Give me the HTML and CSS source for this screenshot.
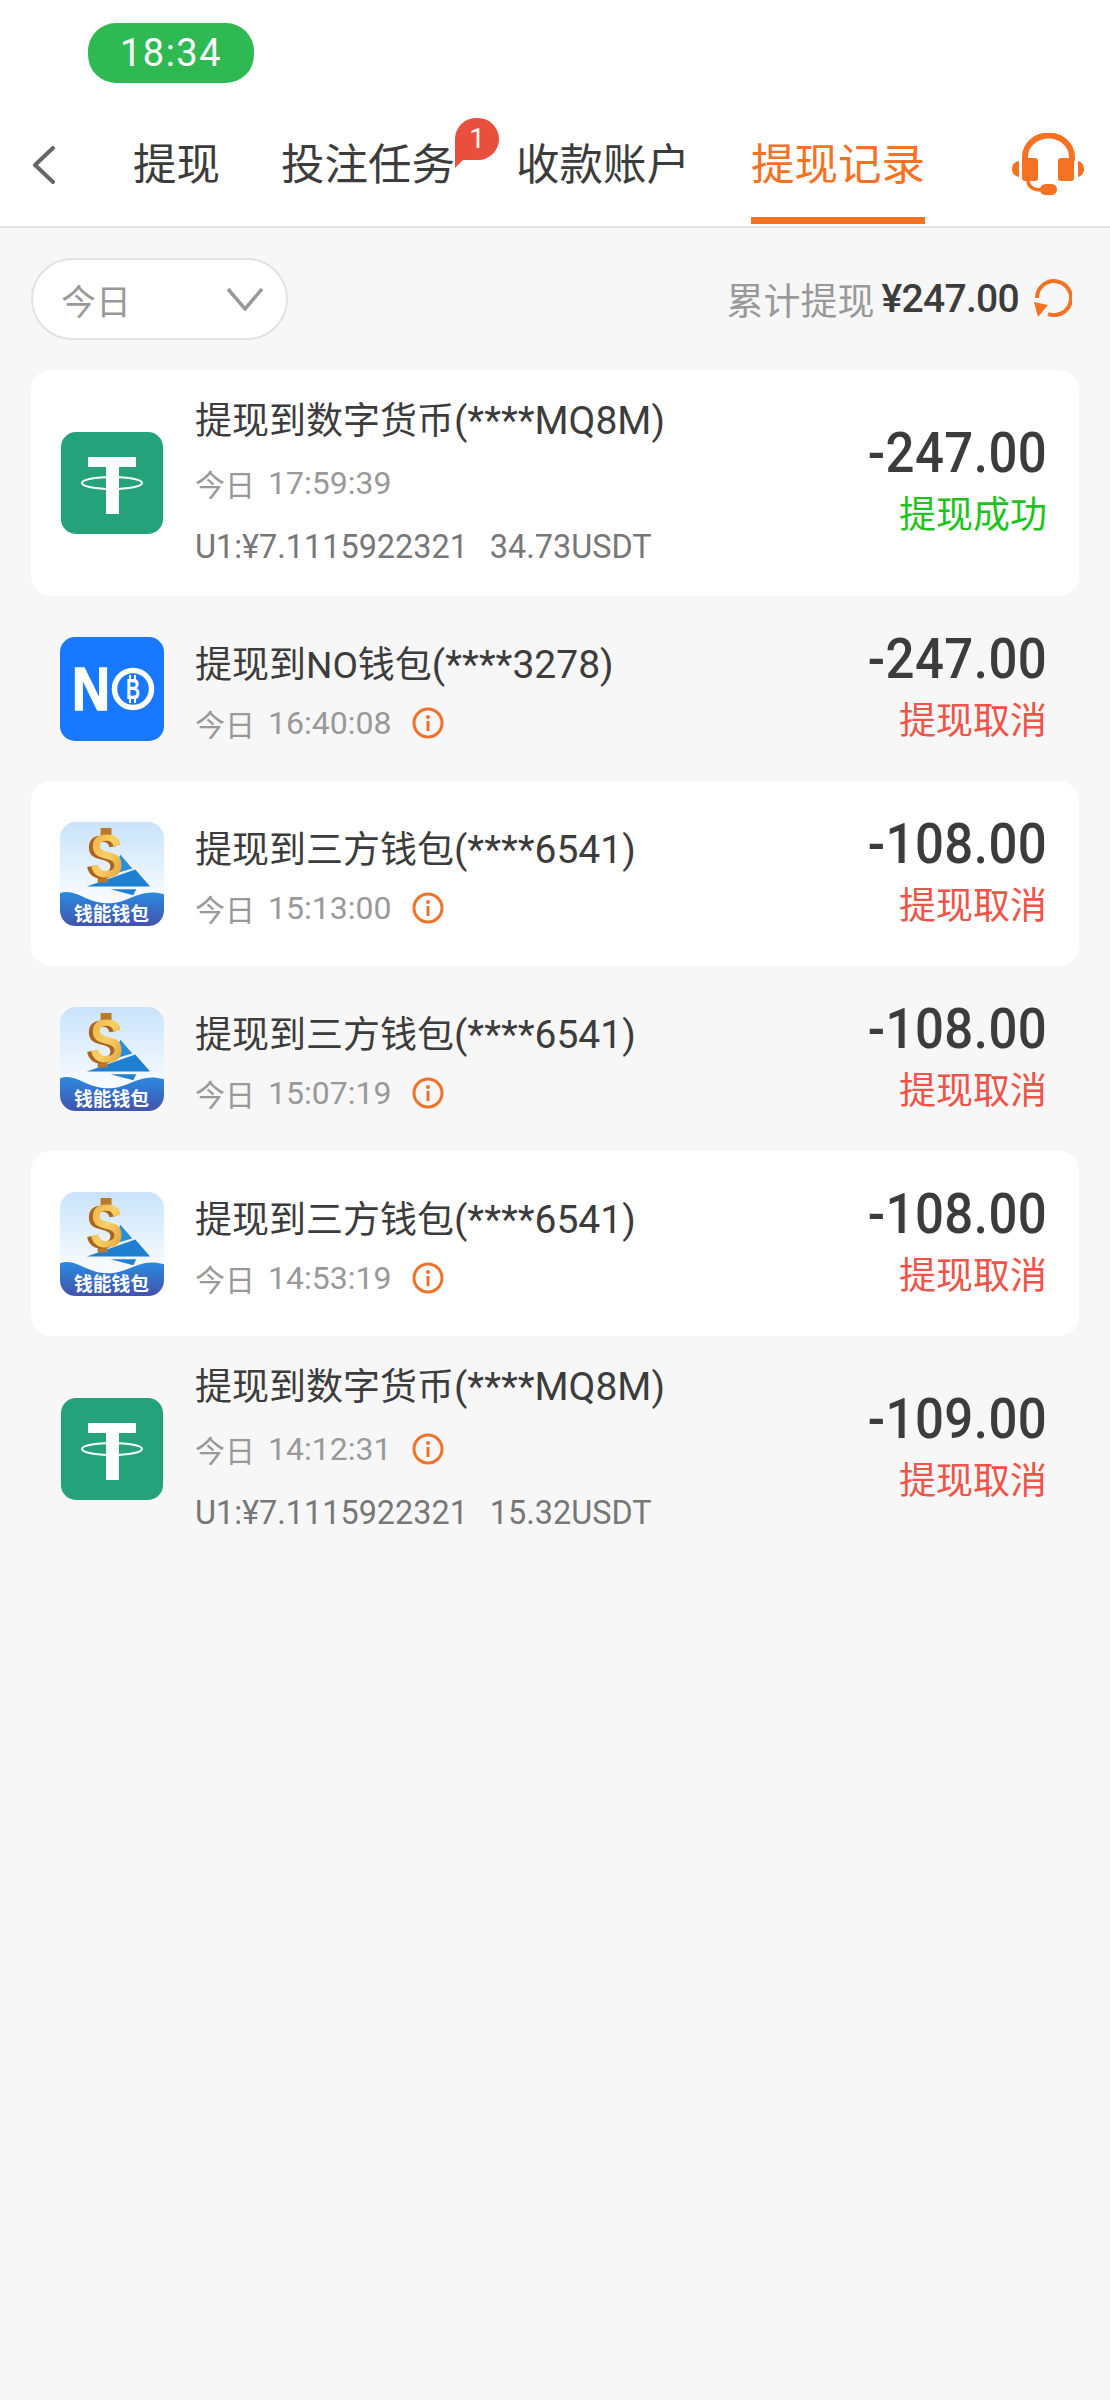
FILE: index.html
```html
<!DOCTYPE html>
<html lang="zh-CN">
<head>
    <meta charset="UTF-8">
    <meta name="viewport" content="width=device-width, initial-scale=1.0">
    <title>提现记录</title>
    <link rel="stylesheet" href="styles.css">
</head>
<body>

    <!-- Shared icons and gradients -->
    <svg class="icon-defs" xmlns="http://www.w3.org/2000/svg">
        <defs>
            <linearGradient id="skyGrad" x1="0" y1="0" x2="0" y2="1">
                <stop offset="0" stop-color="#c9e3fb"/>
                <stop offset="0.7" stop-color="#f6fafe"/>
            </linearGradient>
            <linearGradient id="seaGrad" x1="0" y1="0" x2="0" y2="1">
                <stop offset="0" stop-color="#2a8ae0"/>
                <stop offset="1" stop-color="#4353ac"/>
            </linearGradient>
            <linearGradient id="goldGrad" x1="0" y1="0" x2="1" y2="1">
                <stop offset="0" stop-color="#e9a83c"/>
                <stop offset="0.5" stop-color="#f8d066"/>
                <stop offset="1" stop-color="#dc942c"/>
            </linearGradient>
        </defs>
        <symbol id="icon-usdt" viewBox="0 0 102 102">
            <rect width="102" height="102" rx="15" fill="#26a27b"/>
            <path d="M27 25H75V35H58V82H45V35H27Z" fill="#fff"/>
            <ellipse cx="51" cy="51" rx="30" ry="6" fill="none" stroke="#fff" stroke-width="2"/>
        </symbol>
        <symbol id="icon-info" viewBox="0 0 32 32">
            <circle cx="16" cy="16" r="14" fill="none" stroke="#f0722a" stroke-width="3"/>
            <circle cx="16" cy="10" r="2" fill="#f0722a"/>
            <rect x="14.5" y="14" width="3" height="10" fill="#f0722a"/>
        </symbol>
    </svg>

    <!-- Status bar -->
    <div class="status-bar">
        <span class="time-pill">18:34</span>
    </div>

    <!-- Navigation -->
    <div class="navbar">
        <svg class="back-icon" viewBox="0 0 24 38">
            <path d="M21 2L3 19L21 36" fill="none" stroke="#666" stroke-width="4" stroke-linecap="round" stroke-linejoin="round"/>
        </svg>
        <div class="tabs">
            <a class="tab" href="#">提现</a>
            <a class="tab" href="#">投注任务<span class="badge">1</span></a>
            <a class="tab" href="#">收款账户</a>
            <a class="tab tab-active" href="#">提现记录</a>
        </div>
        <svg class="service-icon" viewBox="0 0 72 62">
            <path d="M13 28V24A23.5 21.5 0 0 1 60 24V28" fill="none" stroke="#f57224" stroke-width="6"/>
            <rect x="10" y="25" width="16" height="23" rx="3" fill="#f57224"/>
            <rect x="46" y="25" width="16" height="23" rx="3" fill="#f57224"/>
            <path d="M7 28V44C2 43 0 40 0 36C0 32 2 29 7 28Z" fill="#f57224"/>
            <path d="M66 28V44C70 43 72 40 72 36C72 32 70 29 66 28Z" fill="#f57224"/>
            <path d="M16 47C16 54 21 57 30 57" fill="none" stroke="#f57224" stroke-width="3.5"/>
            <rect x="28" y="51" width="17" height="11" rx="5.5" fill="#f57224"/>
        </svg>
    </div>

    <!-- Filter and total -->
    <div class="toolbar">
        <div class="date-select">
            <span>今日</span>
            <svg class="select-arrow" viewBox="0 0 38 24">
                <path d="M2 2L19 22L36 2" fill="none" stroke="#999" stroke-width="3.5"/>
            </svg>
        </div>
        <div class="total">
            <span class="total-label">累计提现</span>
            <span class="total-value">¥247.00</span>
            <svg class="refresh-icon" viewBox="0 0 39 39">
                <path d="M4 20A17 17 0 1 1 15 36" fill="none" stroke="#f57224" stroke-width="4"/>
                <path d="M1 24L15 27L5 39Z" fill="#f57224"/>
            </svg>
        </div>
    </div>

    <!-- Withdrawal records -->
    <div class="records">
        <div class="record record-tall record-white">
            <svg class="record-logo logo-usdt"><use href="#icon-usdt"/></svg>
            <div class="record-main">
                <div class="record-title">提现到数字货币<span class="account">(****MQ8M)</span></div>
                <div class="record-time">今日<span class="clock">17:59:39</span></div>
                <div class="record-rate"><span>U1:¥7.1115922321</span><span>34.73USDT</span></div>
            </div>
            <div class="record-side">
                <div class="amount">-247.00</div>
                <div class="state state-ok">提现成功</div>
            </div>
        </div>

        <div class="record">
            <svg class="record-logo" viewBox="0 0 104 104">
                <rect width="104" height="104" rx="15" fill="#1878ff"/>
                <text x="12" y="73" textLength="38" lengthAdjust="spacingAndGlyphs" class="logo-no">N</text>
                <circle cx="73" cy="52" r="18.5" fill="none" stroke="#fff" stroke-width="5.5"/>
                <text x="73" y="62" textLength="14" lengthAdjust="spacingAndGlyphs" class="logo-btc">B</text>
                <path d="M70 38V42M75 38V42M70 62V66M75 62V66" stroke="#fff" stroke-width="2"/>
            </svg>
            <div class="record-main">
                <div class="record-title">提现到NO钱包<span class="account">(****3278)</span></div>
                <div class="record-time">今日<span class="clock">16:40:08</span><svg class="info-icon"><use href="#icon-info"/></svg></div>
            </div>
            <div class="record-side">
                <div class="amount">-247.00</div>
                <div class="state state-cancel">提现取消</div>
            </div>
        </div>

        <div class="record record-white">
            <svg class="record-logo" viewBox="0 0 105 105">
                <rect width="105" height="105" rx="16" fill="url(#skyGrad)"/>
                <path d="M61 33L73 47L52 53Z" fill="#2a8ed8"/>
                <path d="M27 65L76 48L91 65Z" fill="#1f7fd0"/>
                <path d="M51 68H77L74 74Z" fill="#1f7fd0"/>
                <path d="M41 6H52V13H41ZM38 53H48V61H38Z" fill="#b9782a"/>
                <text x="43" y="57" textLength="34" lengthAdjust="spacingAndGlyphs" class="logo-dollar" fill="#a9651f">S</text>
                <text x="47" y="56" textLength="34" lengthAdjust="spacingAndGlyphs" class="logo-dollar" fill="url(#goldGrad)">S</text>
                <path d="M0 72C16 66 28 84 52 82C72 80 82 66 105 73V89C105 98 98 105 89 105H16C7 105 0 98 0 89Z" fill="url(#seaGrad)"/>
                <text x="52" y="100" class="logo-wallet">钱能钱包</text>
            </svg>
            <div class="record-main">
                <div class="record-title">提现到三方钱包<span class="account">(****6541)</span></div>
                <div class="record-time">今日<span class="clock">15:13:00</span><svg class="info-icon"><use href="#icon-info"/></svg></div>
            </div>
            <div class="record-side">
                <div class="amount">-108.00</div>
                <div class="state state-cancel">提现取消</div>
            </div>
        </div>

        <div class="record">
            <svg class="record-logo" viewBox="0 0 105 105">
                <rect width="105" height="105" rx="16" fill="url(#skyGrad)"/>
                <path d="M61 33L73 47L52 53Z" fill="#2a8ed8"/>
                <path d="M27 65L76 48L91 65Z" fill="#1f7fd0"/>
                <path d="M51 68H77L74 74Z" fill="#1f7fd0"/>
                <path d="M41 6H52V13H41ZM38 53H48V61H38Z" fill="#b9782a"/>
                <text x="43" y="57" textLength="34" lengthAdjust="spacingAndGlyphs" class="logo-dollar" fill="#a9651f">S</text>
                <text x="47" y="56" textLength="34" lengthAdjust="spacingAndGlyphs" class="logo-dollar" fill="url(#goldGrad)">S</text>
                <path d="M0 72C16 66 28 84 52 82C72 80 82 66 105 73V89C105 98 98 105 89 105H16C7 105 0 98 0 89Z" fill="url(#seaGrad)"/>
                <text x="52" y="100" class="logo-wallet">钱能钱包</text>
            </svg>
            <div class="record-main">
                <div class="record-title">提现到三方钱包<span class="account">(****6541)</span></div>
                <div class="record-time">今日<span class="clock">15:07:19</span><svg class="info-icon"><use href="#icon-info"/></svg></div>
            </div>
            <div class="record-side">
                <div class="amount">-108.00</div>
                <div class="state state-cancel">提现取消</div>
            </div>
        </div>

        <div class="record record-white">
            <svg class="record-logo" viewBox="0 0 105 105">
                <rect width="105" height="105" rx="16" fill="url(#skyGrad)"/>
                <path d="M61 33L73 47L52 53Z" fill="#2a8ed8"/>
                <path d="M27 65L76 48L91 65Z" fill="#1f7fd0"/>
                <path d="M51 68H77L74 74Z" fill="#1f7fd0"/>
                <path d="M41 6H52V13H41ZM38 53H48V61H38Z" fill="#b9782a"/>
                <text x="43" y="57" textLength="34" lengthAdjust="spacingAndGlyphs" class="logo-dollar" fill="#a9651f">S</text>
                <text x="47" y="56" textLength="34" lengthAdjust="spacingAndGlyphs" class="logo-dollar" fill="url(#goldGrad)">S</text>
                <path d="M0 72C16 66 28 84 52 82C72 80 82 66 105 73V89C105 98 98 105 89 105H16C7 105 0 98 0 89Z" fill="url(#seaGrad)"/>
                <text x="52" y="100" class="logo-wallet">钱能钱包</text>
            </svg>
            <div class="record-main">
                <div class="record-title">提现到三方钱包<span class="account">(****6541)</span></div>
                <div class="record-time">今日<span class="clock">14:53:19</span><svg class="info-icon"><use href="#icon-info"/></svg></div>
            </div>
            <div class="record-side">
                <div class="amount">-108.00</div>
                <div class="state state-cancel">提现取消</div>
            </div>
        </div>

        <div class="record record-tall">
            <svg class="record-logo logo-usdt"><use href="#icon-usdt"/></svg>
            <div class="record-main">
                <div class="record-title">提现到数字货币<span class="account">(****MQ8M)</span></div>
                <div class="record-time">今日<span class="clock">14:12:31</span><svg class="info-icon"><use href="#icon-info"/></svg></div>
                <div class="record-rate"><span>U1:¥7.1115922321</span><span>15.32USDT</span></div>
            </div>
            <div class="record-side">
                <div class="amount">-109.00</div>
                <div class="state state-cancel">提现取消</div>
            </div>
        </div>
    </div>

</body>
</html>
```
FILE: styles.css
```css
body {
    font-family: Roboto, "Noto Sans CJK SC", sans-serif;
    background-color: #f7f7f7;
    color: #3c3c3c;
    margin: 0;
    padding: 0;
    min-height: 2400px;
}

.icon-defs {
    display: block;
    width: 0;
    height: 0;
}

/* Status Bar */
.status-bar {
    background: white;
    height: 83px;
    padding: 23px 0 0 88px;
    box-sizing: border-box;
}

.time-pill {
    display: block;
    width: 166px;
    height: 60px;
    line-height: 60px;
    border-radius: 28px;
    background: #2eb952;
    color: white;
    font-size: 38px;
    letter-spacing: 1.5px;
    text-align: center;
}

/* Navigation Bar */
.navbar {
    display: flex;
    align-items: flex-start;
    background: white;
    height: 143px;
    padding-left: 32px;
    border-bottom: 2px solid #e2e2e2;
}

.back-icon {
    width: 24px;
    height: 38px;
    margin-top: 63px;
    margin-right: 77px;
}

.tabs {
    display: flex;
    gap: 61px;
}

.tab {
    position: relative;
    display: block;
    height: 141px;
    line-height: 165px;
    box-sizing: border-box;
    color: #3c3c3c;
    text-decoration: none;
    font-size: 43.5px;
}

.tab-active {
    color: #f57224;
    border-bottom: 7px solid #f57224;
}

/* Sits just past the end of the tab label */
.badge {
    position: absolute;
    left: 174px;
    top: 35px;
    width: 44px;
    height: 42px;
    border-radius: 21px 21px 21px 0;
    background: #e94f3d;
    color: white;
    font-size: 28px;
    line-height: 42px;
    text-align: center;
}

.badge::after {
    content: "";
    position: absolute;
    left: 0;
    top: 28px;
    border-left: 12px solid #e94f3d;
    border-top: 10px solid #e94f3d;
    border-right: 4px solid transparent;
    border-bottom: 12px solid transparent;
    width: 0;
    height: 0;
}

.service-icon {
    width: 72px;
    height: 62px;
    margin-left: auto;
    margin-top: 50px;
    margin-right: 26px;
}

/* Filter and Total */
.toolbar {
    display: flex;
    justify-content: space-between;
    align-items: center;
    padding: 30px 38px 30px 31px;
}

.date-select {
    display: flex;
    justify-content: space-between;
    align-items: center;
    width: 257px;
    height: 82px;
    box-sizing: border-box;
    padding: 0 22px 0 28px;
    background: white;
    border: 2px solid #e2e2e2;
    border-radius: 41px;
    color: #999;
    font-size: 35px;
}

.select-arrow {
    width: 38px;
    height: 24px;
}

.total {
    display: flex;
    align-items: center;
}

.total-label {
    color: #999;
    font-size: 37px;
}

.total-value {
    margin-left: 7px;
    font-size: 39px;
    font-weight: 500;
    letter-spacing: -0.7px;
}

.refresh-icon {
    width: 39px;
    height: 39px;
    margin-left: 14px;
    margin-top: -3px;
}

/* Record Rows */
.records {
    margin: 0 31px;
}

.record {
    display: flex;
    align-items: center;
    height: 185px;
    box-sizing: border-box;
    padding: 0 32px 0 29px;
    border-radius: 20px;
}

.record-tall {
    height: 226px;
}

.record-white {
    background: white;
}

.record-logo {
    width: 104px;
    height: 104px;
    flex-shrink: 0;
}

.logo-usdt {
    width: 102px;
    height: 102px;
    margin: 0 1px;
}

.record-main {
    align-self: flex-start;
    flex: 1;
    margin-left: 31px;
    padding-top: 44px;
}

.record-tall .record-main {
    padding-top: 26px;
}

.record-title {
    font-size: 37px;
    line-height: 50px;
}

.account {
    font-size: 39px;
}

.record-time {
    display: flex;
    align-items: center;
    margin-top: 12px;
    height: 40px;
    color: #999;
    font-size: 30px;
}

.record-tall .record-time {
    margin-top: 16px;
}

.clock {
    margin-left: 13px;
    font-size: 32px;
}

.info-icon {
    width: 32px;
    height: 32px;
    margin-left: 21px;
}

.record-rate {
    display: flex;
    gap: 22px;
    margin-top: 24px;
    color: #777;
    font-size: 32.4px;
    line-height: 40px;
}

.record-side {
    text-align: right;
    padding-top: 3px;
}

/* Squeezed a little so the figures stay tall but narrow */
.amount {
    padding-bottom: 3px;
    font-size: 56px;
    font-weight: 500;
    line-height: 60px;
    letter-spacing: 0.5px;
    transform: scaleX(0.91);
    transform-origin: right center;
}

.state {
    font-size: 37px;
    line-height: 60px;
}

.state-ok { color: #1ec31e; }
.state-cancel { color: #ee5548; }

/* Text inside the drawn logos */
.logo-no {
    fill: white;
    stroke: white;
    stroke-width: 1.5px;
    font-family: "Liberation Sans", sans-serif;
    font-size: 62px;
    font-weight: bold;
}

.logo-btc {
    fill: white;
    font-family: "Liberation Sans", sans-serif;
    font-size: 29px;
    font-weight: bold;
    text-anchor: middle;
}

.logo-dollar {
    font-family: "Liberation Sans", sans-serif;
    font-size: 62px;
    font-weight: bold;
    text-anchor: middle;
}

.logo-wallet {
    fill: white;
    font-family: "Noto Sans CJK SC", sans-serif;
    font-size: 19px;
    font-weight: bold;
    text-anchor: middle;
}
```
